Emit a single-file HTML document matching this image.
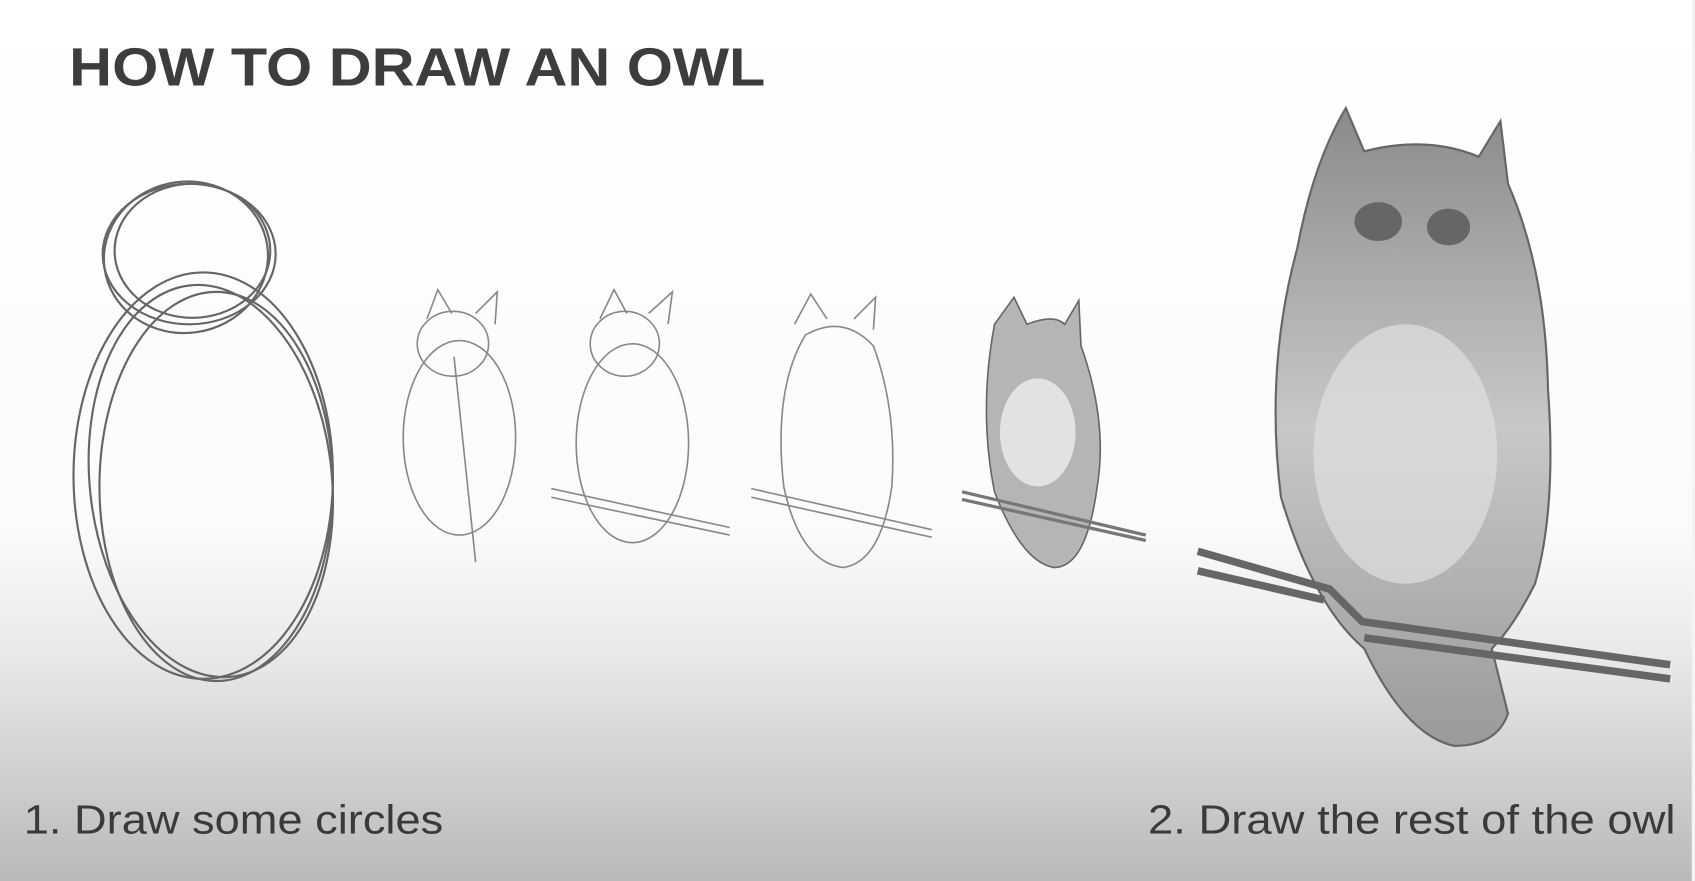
<!DOCTYPE html>
<html><head><meta charset="utf-8"><style>
html,body{margin:0;padding:0;width:1695px;height:881px;overflow:hidden;background:#fff}
svg{display:block}
</style></head><body>
<svg width="1695" height="881" viewBox="0 0 1568 815" preserveAspectRatio="none" xmlns="http://www.w3.org/2000/svg">
<defs>
<linearGradient id="bg" x1="0" y1="0" x2="0" y2="1">
<stop offset="0" stop-color="#ffffff"/>
<stop offset="0.6" stop-color="#fbfbfb"/>
<stop offset="0.75" stop-color="#e8e8e8"/>
<stop offset="1" stop-color="#b9b9b9"/>
</linearGradient>
<linearGradient id="owl" x1="0" y1="0" x2="0" y2="1">
<stop offset="0" stop-color="#8a8a8a"/>
<stop offset="0.5" stop-color="#c8c8c8"/>
<stop offset="1" stop-color="#9a9a9a"/>
</linearGradient>
</defs>
<rect width="1568" height="815" fill="url(#bg)"/>
<rect x="1565" y="0" width="3" height="815" fill="#f4f4f4"/>
<text x="64" y="79" textLength="644" lengthAdjust="spacingAndGlyphs" font-family="Liberation Sans, sans-serif" font-weight="bold" font-size="50" fill="#3d3d3d">HOW TO DRAW AN OWL</text>
<text x="22" y="771" textLength="388" lengthAdjust="spacingAndGlyphs" font-family="Liberation Sans, sans-serif" font-size="38" fill="#3a3a3a">1. Draw some circles</text>
<text x="1062" y="771" textLength="488" lengthAdjust="spacingAndGlyphs" font-family="Liberation Sans, sans-serif" font-size="38" fill="#3a3a3a">2. Draw the rest of the owl</text>
<g fill="none" stroke="#666" stroke-width="2">
<ellipse cx="175" cy="235" rx="80" ry="65"/><ellipse cx="172" cy="238" rx="76" ry="70" transform="rotate(-8 172 238)"/><ellipse cx="178" cy="232" rx="72" ry="62"/>
<ellipse cx="188" cy="440" rx="120" ry="188"/><ellipse cx="195" cy="445" rx="112" ry="182" transform="rotate(-6 195 445)"/><ellipse cx="200" cy="450" rx="108" ry="180"/>
</g>
<g fill="none" stroke="#888" stroke-width="1.5">
<ellipse cx="419" cy="318" rx="33" ry="30"/><ellipse cx="425" cy="405" rx="52" ry="90"/><path d="M395 295 L405 268 L418 290 M440 290 L460 270 L458 300 M420 330 L440 520"/>
<ellipse cx="578" cy="318" rx="32" ry="30"/><ellipse cx="585" cy="410" rx="52" ry="92"/><path d="M555 295 L568 268 L580 290 M600 290 L622 270 L618 300 M510 452 L675 488 M510 460 L675 495"/>
<path d="M735 300 L750 272 L765 295 M790 295 L810 275 L808 305 M745 310 Q780 290 808 320 Q830 380 825 450 Q815 520 780 525 Q740 520 725 450 Q715 360 745 310 Z M695 452 L862 490 M695 460 L862 497"/>
</g>
<g>
<path d="M920 300 L938 275 L950 300 Q975 290 985 300 L998 278 L1000 320 Q1025 390 1015 450 Q1005 525 975 525 Q945 520 920 455 Q905 380 920 300 Z" fill="#b5b5b5" stroke="#666" stroke-width="1.5"/>
<ellipse cx="960" cy="400" rx="35" ry="50" fill="#e2e2e2"/>
<path d="M890 455 L1060 495 M890 462 L1060 500" stroke="#777" stroke-width="3"/>
</g>
<g>
<path d="M1245 100 L1262 140 Q1320 125 1368 145 L1388 112 L1395 170 Q1430 250 1432 360 Q1440 470 1420 540 Q1400 580 1380 600 L1395 660 Q1385 690 1345 690 Q1300 680 1262 600 Q1215 560 1185 460 Q1170 340 1200 230 Q1215 150 1245 100 Z" fill="url(#owl)" stroke="#666" stroke-width="2"/>
<ellipse cx="1300" cy="420" rx="85" ry="120" fill="#e0e0e0" opacity="0.7"/>
<ellipse cx="1275" cy="205" rx="22" ry="18" fill="#666"/><ellipse cx="1340" cy="210" rx="20" ry="17" fill="#666"/>
<path d="M1108 510 L1230 545 L1260 575 L1545 615 M1108 528 L1225 555 M1262 590 L1545 628" stroke="#666" stroke-width="7" fill="none"/>
</g>
</svg>
</body></html>
